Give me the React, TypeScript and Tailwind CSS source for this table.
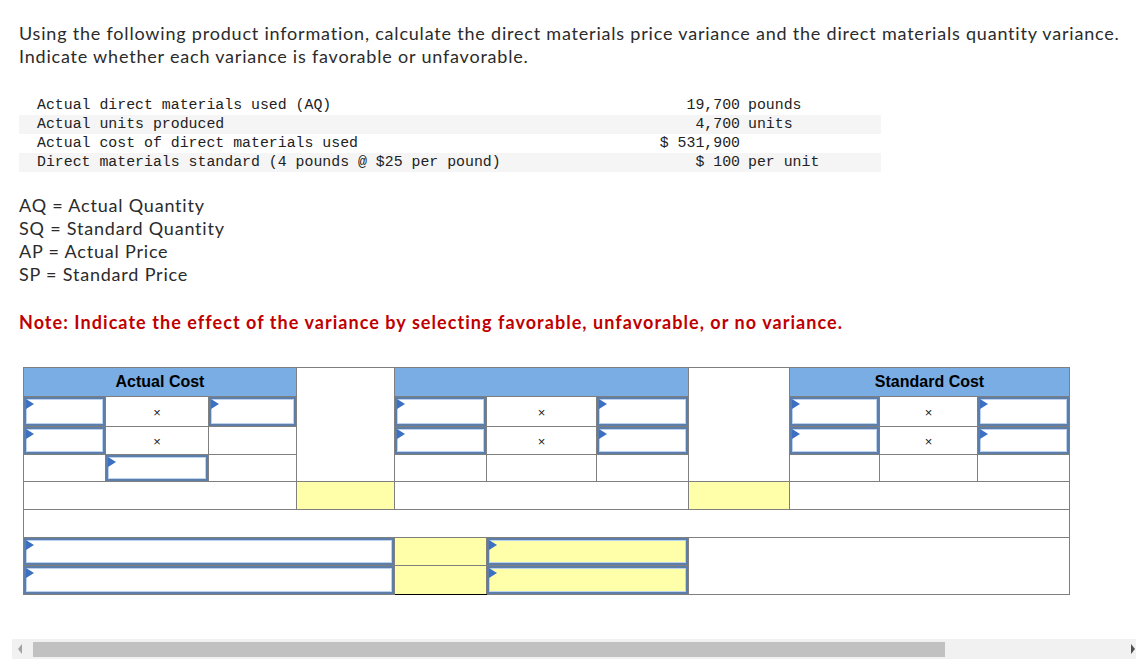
import React from "react";

const Flag = () => (
  <span className="absolute left-0 top-0 w-0 h-0 border-y-[5px] border-y-transparent border-l-[8px] border-l-[#3b70c2]" />
);

const Input = ({ yellow = false }: { yellow?: boolean }) => (
  <div
    className={`absolute inset-0 border-2 border-[#5d7ea8] ${yellow ? "bg-[#ffffaa]" : "bg-white"}`}
  >
    <div className="absolute inset-0 border border-[#bcd2f0]" />
    <Flag />
  </div>
);

const X = () => (
  <span className="text-[13px] leading-none text-[#222]" style={{ fontFamily: '"Liberation Sans", Arial, sans-serif' }}>
    ×
  </span>
);

const cell = "border border-[#7f7f7f] p-0 relative";

export default function App() {
  const rows = [
    ["Actual direct materials used (AQ)", "19,700", "pounds"],
    ["Actual units produced", "4,700", "units"],
    ["Actual cost of direct materials used", "$ 531,900", ""],
    ["Direct materials standard (4 pounds @ $25 per pound)", "$ 100", "per unit"],
  ];
  const widths = [82, 103, 88, 98, 92, 110, 92, 101, 90, 98, 92];
  return (
    <div className="w-[1136px] h-[669px] bg-white overflow-hidden text-[#2b2b2b]" style={{ fontFamily: 'Lato, "Open Sans", sans-serif' }}>
      <div className="pl-[19px] pt-[22px] text-[18px] leading-[23px] tracking-[0.8px]">
        Using the following product information, calculate the direct materials price variance and the direct materials quantity variance.
        <br />
        Indicate whether each variance is favorable or unfavorable.
      </div>

      <div
        className="mt-[28px] ml-[19px] w-[862px] text-[14.87px] leading-[19px] text-[#222]"
        style={{ fontFamily: '"Liberation Mono", "DejaVu Sans Mono", monospace' }}
      >
        {rows.map((r, i) => (
          <div key={i} className={`flex h-[19px] whitespace-pre ${i % 2 === 1 ? "bg-[#f5f5f5]" : ""}`}>
            <div className="w-[560px] pl-[18px]">{r[0]}</div>
            <div className="w-[161px] text-right">{r[1]}</div>
            <div className="flex-1 pl-[8px]">{r[2]}</div>
          </div>
        ))}
      </div>

      <div className="mt-[22px] pl-[19px] text-[18px] leading-[23px] tracking-[0.8px]">
        <div>AQ = Actual Quantity</div>
        <div>SQ = Standard Quantity</div>
        <div>AP = Actual Price</div>
        <div>SP = Standard Price</div>
      </div>

      <div className="mt-[25px] pl-[19px] text-[18px] leading-[23px] tracking-[1.05px] font-bold text-[#c00000]">
        Note: Indicate the effect of the variance by selecting favorable, unfavorable, or no variance.
      </div>

      <table className="mt-[33px] ml-[23px] border-collapse table-fixed w-[1046px]" style={{ fontFamily: '"Liberation Sans", Arial, sans-serif' }}>
        <colgroup>
          {widths.map((w, i) => (
            <col key={i} style={{ width: w }} />
          ))}
        </colgroup>
        <tbody>
          <tr className="h-[29px]">
            <td colSpan={3} className={`${cell} bg-[#79ade4] text-center font-bold text-[16px] text-black`}>Actual Cost</td>
            <td rowSpan={4} className={`${cell} bg-white`} />
            <td colSpan={3} className={`${cell} bg-[#79ade4]`} />
            <td rowSpan={4} className={`${cell} bg-white`} />
            <td colSpan={3} className={`${cell} bg-[#79ade4] text-center font-bold text-[16px] text-black`}>Standard Cost</td>
          </tr>
          <tr className="h-[30px]">
            <td className={cell}><Input /></td>
            <td className={`${cell} text-center`}><X /></td>
            <td className={cell}><Input /></td>
            <td className={cell}><Input /></td>
            <td className={`${cell} text-center`}><X /></td>
            <td className={cell}><Input /></td>
            <td className={cell}><Input /></td>
            <td className={`${cell} text-center`}><X /></td>
            <td className={cell}><Input /></td>
          </tr>
          <tr className="h-[28px]">
            <td className={cell}><Input /></td>
            <td className={`${cell} text-center`}><X /></td>
            <td className={cell} />
            <td className={cell}><Input /></td>
            <td className={`${cell} text-center`}><X /></td>
            <td className={cell}><Input /></td>
            <td className={cell}><Input /></td>
            <td className={`${cell} text-center`}><X /></td>
            <td className={cell}><Input /></td>
          </tr>
          <tr className="h-[27px]">
            <td className={cell} />
            <td className={`${cell} border-t-black`}><Input /></td>
            <td className={cell} />
            <td className={cell} />
            <td className={cell} />
            <td className={cell} />
            <td className={cell} />
            <td className={cell} />
            <td className={cell} />
          </tr>
          <tr className="h-[28px]">
            <td colSpan={3} className={cell} />
            <td className={`${cell} bg-[#ffffaa]`} />
            <td colSpan={3} className={cell} />
            <td className={`${cell} bg-[#ffffaa]`} />
            <td colSpan={3} className={cell} />
          </tr>
          <tr className="h-[28px]">
            <td colSpan={11} className={cell} />
          </tr>
          <tr className="h-[28px]">
            <td colSpan={4} className={cell}><Input /></td>
            <td className={`${cell} bg-[#ffffaa]`} />
            <td colSpan={2} className={cell}><Input yellow /></td>
            <td colSpan={4} rowSpan={2} className={cell} />
          </tr>
          <tr className="h-[29px]">
            <td colSpan={4} className={cell}><Input /></td>
            <td className={`${cell} bg-[#ffffaa] border-b-black`} />
            <td colSpan={2} className={cell}><Input yellow /></td>
          </tr>
        </tbody>
      </table>

      <div className="mt-[44px] ml-[12px] h-[20px] bg-[#f1f1f1] flex items-center relative">
        <span className="absolute left-[6px] top-[5px] w-0 h-0 border-y-[5px] border-y-transparent border-r-[4px] border-r-[#a3a3a3]" />
        <div className="ml-[21px] w-[912px] h-[15px] bg-[#c1c1c1]" />
        <span className="absolute right-[1px] top-[5px] w-0 h-0 border-y-[5px] border-y-transparent border-l-[4px] border-l-[#505050]" />
      </div>
    </div>
  );
}
